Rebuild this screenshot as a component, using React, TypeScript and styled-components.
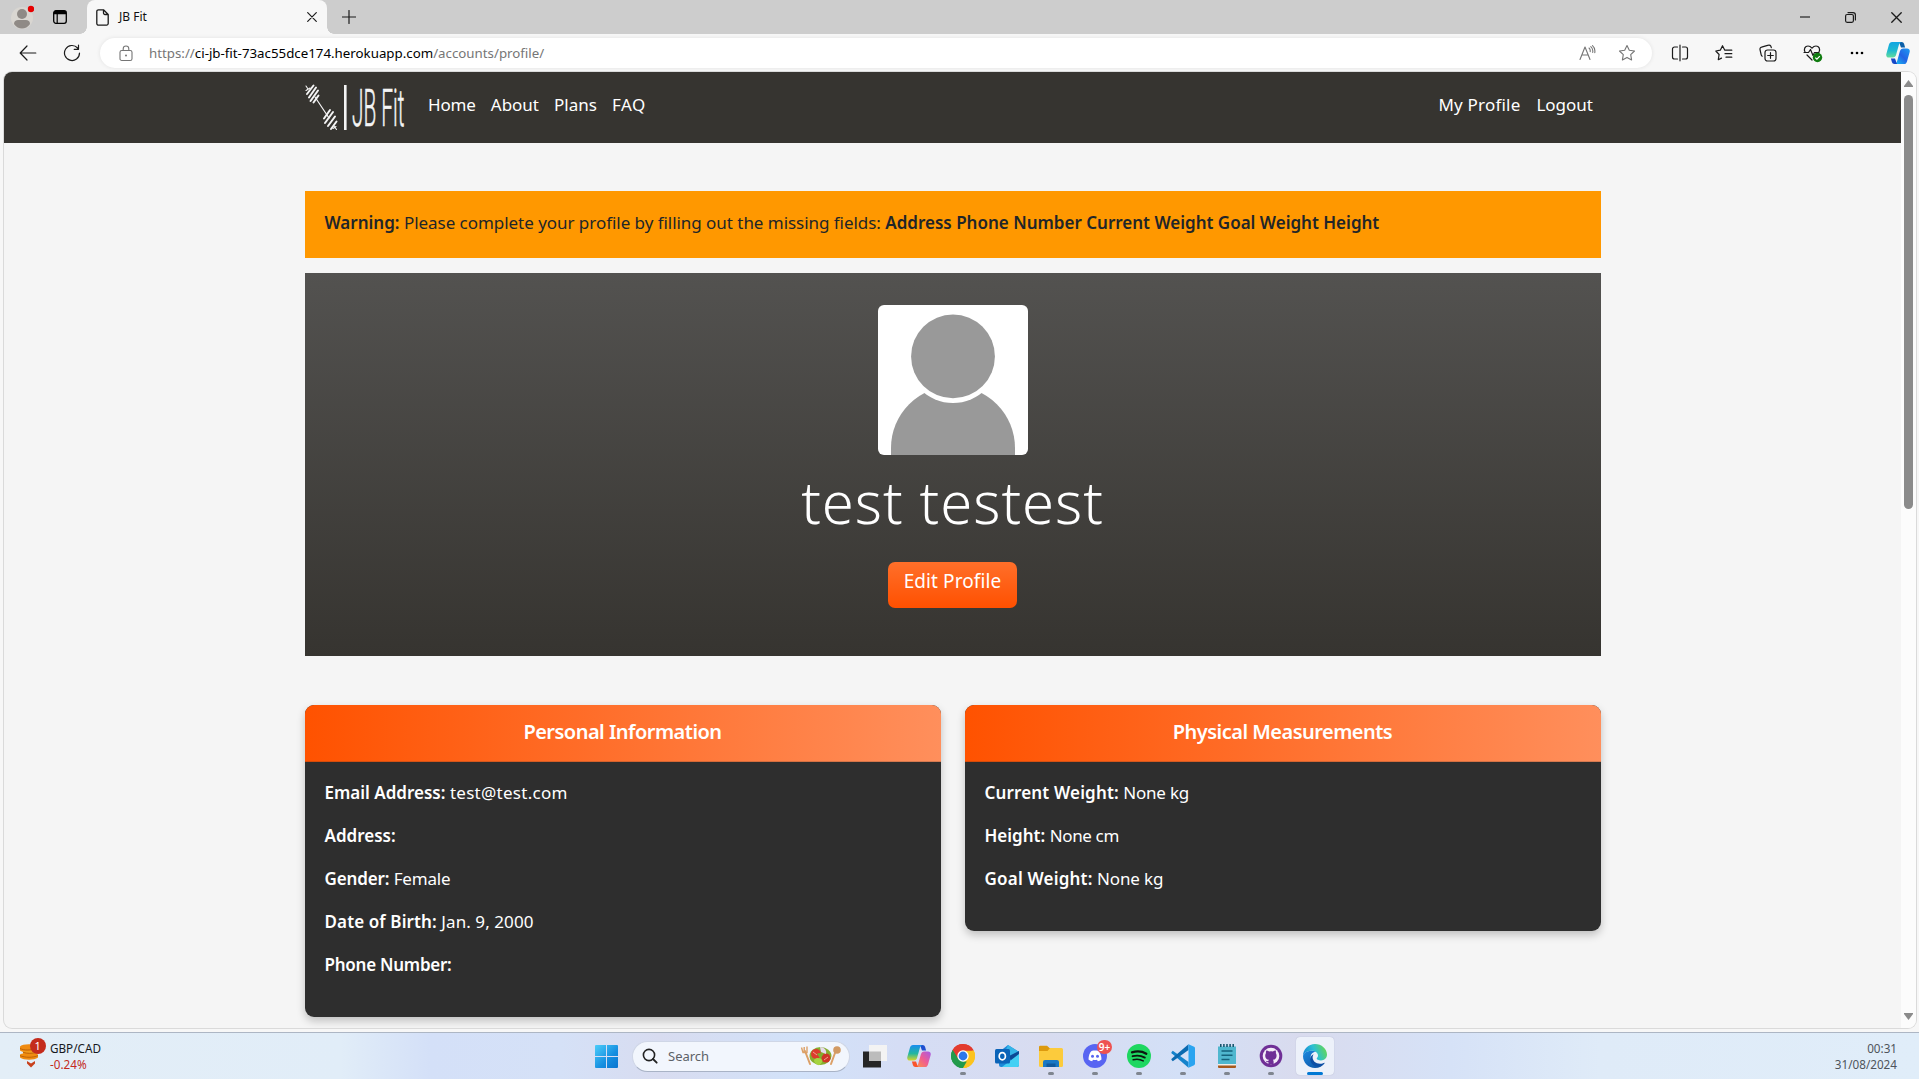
import React from 'react';
import styled, { createGlobalStyle } from 'styled-components';

const Global = createGlobalStyle`
  * { box-sizing: border-box; }
  html, body { margin: 0; padding: 0; overflow: hidden; }
  body { font-family: "Noto Sans", "Open Sans", sans-serif; color: #212529; }
  svg { display: block; flex: none; }
`;

/* ---------- window ---------- */
const Desktop = styled.div`
  width: 1919px;
  height: 1079px;
  display: flex;
  flex-direction: column;
  background: #f7f7f7;
  overflow: hidden;
`;

const TabStrip = styled.div`
  height: 34px;
  flex: none;
  display: flex;
  background: #cdcdcd;
`;

const StripTools = styled.div`
  width: 87px;
  display: flex;
  align-items: center;
  gap: 19px;
  padding-left: 11px;
`;

const Tab = styled.div`
  position: relative;
  width: 240px;
  height: 34px;
  display: flex;
  align-items: center;
  padding: 0 10px 0 9px;
  background: #f7f7f7;
  border-radius: 8px 8px 0 0;

  &::before,
  &::after {
    content: '';
    position: absolute;
    bottom: 0;
    width: 7px;
    height: 7px;
  }
  &::before {
    left: -7px;
    background: radial-gradient(circle at 0 0, #cdcdcd 6.5px, #f7f7f7 7px);
  }
  &::after {
    right: -7px;
    background: radial-gradient(circle at 100% 0, #cdcdcd 6.5px, #f7f7f7 7px);
  }
`;

const TabTitle = styled.span`
  flex: 1;
  margin: -1px 0 0 10px;
  font-size: 12px;
  color: #111;
`;

const NewTab = styled.div`
  display: flex;
  align-items: center;
  margin-left: 15px;
`;

const WindowButtons = styled.div`
  margin-left: auto;
  display: flex;
`;

const WindowButton = styled.div`
  width: 45.7px;
  display: grid;
  place-items: center;
`;

const Toolbar = styled.div`
  height: 38px;
  flex: none;
  display: flex;
  align-items: center;
  background: #f7f7f7;
`;

const NavButtons = styled.div`
  width: 100px;
  display: flex;
  align-items: center;
  gap: 26px;
  padding-left: 19px;
`;

const AddressBar = styled.div`
  width: 1552px;
  height: 30px;
  margin-right: 6px;
  display: flex;
  align-items: center;
  padding: 0 16px 0 19px;
  background: #fff;
  border-radius: 15px;
  box-shadow: 0 0 4px rgba(0, 0, 0, 0.09);
`;

const Url = styled.div`
  flex: 1;
  margin-left: 16px;
  font-size: 13.3px;
  color: #767676;
  white-space: nowrap;

  b {
    font-weight: 400;
    color: #000;
  }
`;

const AddressActions = styled.div`
  display: flex;
  align-items: center;
  gap: 22px;
`;

const ToolSlot = styled.div<{ $w?: number }>`
  width: ${(p) => p.$w ?? 44}px;
  display: grid;
  place-items: center;
`;

/* ---------- page ---------- */
const Viewport = styled.div`
  height: 956px;
  flex: none;
  margin: 0 3px 0 4px;
  display: flex;
  background: #f5f5f5;
  border-radius: 8px;
  overflow: hidden;
  box-shadow: 0 0 0 1px #dadada;
`;

const Page = styled.div`
  width: 1897px;
  display: flex;
  flex-direction: column;
  align-items: center;
`;

const SiteNav = styled.nav`
  width: 100%;
  height: 71px;
  flex: none;
  display: flex;
  padding: 0 300px 0 301px;
  background: #363430;
`;

const Brand = styled.div`
  width: 123px;
  padding-top: 4px;
`;

const BrandText = styled.text`
  font-family: Roboto, "Noto Sans", sans-serif;
  font-weight: 300;
  font-size: 51px;
  fill: #f4f4f4;
  stroke: #f4f4f4;
  stroke-width: 0.6px;
`;

const Links = styled.div<{ $right?: boolean }>`
  display: flex;
  gap: ${(p) => (p.$right ? 16 : 15)}px;
  margin-left: ${(p) => (p.$right ? 'auto' : '0')};
  padding: 19px ${(p) => (p.$right ? 8 : 0)}px 0 0;
`;

const NavLink = styled.a<{ $track?: number }>`
  font-size: 17px;
  line-height: 27px;
  letter-spacing: ${(p) => p.$track ?? 0}px;
  color: #fff;
`;

const Container = styled.main`
  width: 1296px;
  margin-top: 48px;
`;

const Warning = styled.div`
  height: 67px;
  padding: 18px 20px 0;
  background: #ff9800;
  font-size: 17px;
  line-height: 27px;
  letter-spacing: -0.04px;
  white-space: nowrap;
  color: #212529;

  strong {
    font-weight: 600;
    letter-spacing: 0;
  }
`;

const Hero = styled.section`
  height: 383px;
  margin-top: 15px;
  padding-top: 32px;
  display: flex;
  flex-direction: column;
  align-items: center;
  background: linear-gradient(#535250, #363430);
`;

const Avatar = styled.svg`
  width: 150px;
  height: 150px;
  border-radius: 6px;
  background: #fff;
`;

const Name = styled.h1`
  margin: 13px 0 26px;
  font-size: 58px;
  line-height: 68px;
  font-weight: 300;
  letter-spacing: 0.95px;
  color: #fff;
`;

const EditButton = styled.button`
  width: 129px;
  height: 46px;
  padding: 5px 0 13px;
  border: 0;
  border-radius: 7px;
  background: linear-gradient(#ff6f2a, #ff5000);
  font-family: inherit;
  font-size: 19px;
  line-height: 28px;
  letter-spacing: 0.1px;
  color: #fff;
`;

const Cards = styled.div`
  display: grid;
  grid-template-columns: 636px 636px;
  gap: 24px;
  align-items: start;
  margin-top: 49px;
`;

const Card = styled.section`
  background: #2e2e2e;
  border-radius: 9px;
  overflow: hidden;
  box-shadow: 0 4px 8px rgba(0, 0, 0, 0.22);
`;

const CardHeader = styled.h2`
  height: 57px;
  margin: 0;
  padding-top: 12px;
  text-align: center;
  font-size: 20px;
  line-height: 30px;
  font-weight: 600;
  letter-spacing: -0.52px;
  color: #fff;
  border-bottom: 1px solid rgba(46, 46, 46, 0.2);
  background: linear-gradient(90deg, #ff5200, #ff8f5c) border-box;
`;

const CardBody = styled.div`
  padding: 17px 20px 23px;
`;

const Field = styled.p`
  margin: 0 0 16px;
  font-size: 17px;
  line-height: 27px;
  color: #fff;
`;

const Label = styled.strong<{ $track: number }>`
  font-weight: 600;
  letter-spacing: ${(p) => p.$track}px;
`;

const Value = styled.span<{ $track: number }>`
  letter-spacing: ${(p) => p.$track}px;
`;

const Scrollbar = styled.div`
  width: 15px;
  display: flex;
  flex-direction: column;
  align-items: center;
  padding: 8px 0;
  background: #fcfcfc;
`;

const Thumb = styled.div`
  width: 9px;
  height: 414px;
  margin: 8px 0 auto;
  border-radius: 5px;
  background: #8b8b8b;
`;

/* ---------- taskbar ---------- */
const Taskbar = styled.footer`
  height: 47px;
  margin-top: 4px;
  flex: none;
  display: grid;
  grid-template-columns: 586px auto 1fr;
  border-top: 1px solid #adb6c4;
  background: linear-gradient(
    90deg,
    #e3eef7 0,
    #e1edf8 340px,
    #d4e0f8 430px,
    #d5e1f7 560px,
    #d8dcf0 660px,
    #d2e2f9 800px,
    #d5ddf5 900px,
    #d8dcf0 1050px,
    #d3e0f7 1180px,
    #d9dbee 1300px,
    #d6e2f7 1450px,
    #dfebf8 1600px,
    #e0edf9 1919px
  );
`;

const Widget = styled.div`
  display: flex;
  padding-left: 17px;
`;

const WidgetIcon = styled.div`
  width: 33px;
  padding-top: 4px;
`;

const TwoLines = styled.div<{ $end?: boolean }>`
  display: flex;
  flex-direction: column;
  padding: ${(p) => (p.$end ? '7px 22px 0 0' : '7px 0 0')};
  text-align: ${(p) => (p.$end ? 'right' : 'left')};
  font-size: 11.7px;
  line-height: 16px;
  color: ${(p) => (p.$end ? '#4e545b' : '#16191d')};
`;

const Loss = styled.span`
  color: #c42b1c;
`;

const Apps = styled.div`
  display: flex;
  align-items: center;
`;

const StartSlot = styled.div`
  width: 46px;
  padding-left: 9px;
`;

const SearchBox = styled.div`
  width: 218px;
  height: 31px;
  margin-right: 3px;
  display: flex;
  align-items: center;
  padding: 0 7px 0 9px;
  border: 1px solid #cfd6e6;
  border-bottom-color: #a9b3c6;
  border-radius: 16px;
  background: #f2f6fd;

  span {
    flex: 1;
    margin-left: 10px;
    font-size: 13px;
    color: #5d6167;
  }
`;

const AppSlot = styled.div`
  position: relative;
  width: 44px;
  height: 46px;
  display: grid;
  place-items: center;
`;

const ActiveTile = styled.div`
  width: 38px;
  height: 38px;
  display: grid;
  place-items: center;
  border-radius: 4px;
  background: #edf1fa;
  box-shadow: 0 0 1px rgba(90, 100, 130, 0.4);
`;

const Running = styled.i<{ $active?: boolean }>`
  position: absolute;
  bottom: 4px;
  left: 50%;
  transform: translateX(-50%);
  width: ${(p) => (p.$active ? 16 : 6)}px;
  height: 3px;
  border-radius: 2px;
  background: ${(p) => (p.$active ? '#0078d4' : '#7f858f')};
`;

const Badge = styled.b`
  position: absolute;
  left: 24px;
  top: 7px;
  width: 15px;
  height: 14px;
  border-radius: 7px;
  background: #ee5251;
  color: #fff;
  font-size: 10px;
  line-height: 14px;
  font-weight: 600;
  text-align: center;
`;

const WidgetCount = styled.text`
  font-family: "Noto Sans", sans-serif;
  font-size: 11px;
  fill: #fff;
`;

const line = { fill: 'none', stroke: '#1b1b1b', strokeWidth: 1.2, strokeLinecap: 'round', strokeLinejoin: 'round' } as const;
const faint = { ...line, stroke: '#757575', strokeWidth: 1.1 } as const;

/* ---------- browser icons ---------- */
const ProfileIcon = () => (
  <svg width="23" height="24" viewBox="0 0 23 24">
    <circle cx="11" cy="13" r="11" fill="#d9d6d1" />
    <circle cx="11" cy="9" r="5" fill="#8f8a86" />
    <path d="M3 19c0-3 2-4 4-4h8c2 0 4 1 4 4-2 3-5 4.500-8 4.500S5 22 3 19z" fill="#8f8a86" />
    <circle cx="20" cy="4" r="3.200" fill="#e60000" />
  </svg>
);

const TabActionsIcon = () => (
  <svg width="14" height="14" viewBox="0 0 14 14">
    <rect x=".7" y=".7" width="12.600" height="12.600" rx="2.200" fill="none" stroke="#000" strokeWidth="1.300" />
    <path d="M.7 3a2.300 2.300 0 0 1 2.300-2.300h8A2.300 2.300 0 0 1 13.300 3v1.300H.7z" fill="#000" />
    <path d="M4.200 4v9.300" stroke="#000" strokeWidth="1.200" />
  </svg>
);

const DocIcon = () => (
  <svg width="13" height="17" viewBox="0 0 13 17">
    <path {...line} strokeWidth={1.3} d="M2.500.8h5L12.200 5.500v9a1.600 1.600 0 0 1-1.600 1.600h-8A1.700 1.700 0 0 1 .8 14.500v-12A1.700 1.700 0 0 1 2.500.8zM7.500.8v3.200a1.500 1.500 0 0 0 1.500 1.500h3.200" />
  </svg>
);

const Cross = ({ size }: { size: number }) => (
  <svg width={size} height={size} viewBox="0 0 10 10">
    <path {...line} d="M.7.7l8.600 8.600M9.300.7L.7 9.300" />
  </svg>
);

const PlusIcon = () => (
  <svg width="14" height="14" viewBox="0 0 14 14">
    <path {...line} d="M7 .5v13M.5 7h13" />
  </svg>
);

const BackIcon = () => (
  <svg width="18" height="16" viewBox="0 0 18 16">
    <path {...line} d="M8 1L1.200 8 8 15M1.200 8h15.600" />
  </svg>
);

const ReloadIcon = () => (
  <svg width="18" height="18" viewBox="0 0 18 18">
    <path {...line} d="M16.500 9A7.500 7.500 0 1 1 14.600 4M15.500 1v4.300h-4.300" />
  </svg>
);

const LockIcon = () => (
  <svg width="14" height="17" viewBox="0 0 14 17">
    <rect {...faint} x="1" y="5.500" width="12" height="10" rx="1.800" />
    <path {...faint} d="M4.200 5.500V3.800a2.800 2.800 0 0 1 5.600 0v1.700" />
    <circle cx="7" cy="10.500" r="1" fill="#757575" />
  </svg>
);

const ReadAloudIcon = () => (
  <svg width="17" height="16" viewBox="0 0 17 16">
    <path {...faint} d="M1 14.500L6 2l5 12.500M2.800 10h6.400M10 3c1 .8 1.400 2.200 1.200 3.600M11.800 1.600c1.700 1.400 2.300 3.600 1.900 5.900M13.500.6c2 1.700 2.700 4.200 2.300 7" />
  </svg>
);

const STAR = 'M9 1.500l2.300 4.700 5.200.8-3.800 3.700.9 5.200L9 13.400l-4.600 2.500.9-5.200L1.500 7l5.200-.8z';

const StarIcon = () => (
  <svg width="18" height="18" viewBox="0 0 18 18">
    <path {...faint} d={STAR} />
  </svg>
);

const SplitIcon = () => (
  <svg width="18" height="18" viewBox="0 0 18 18">
    <path {...line} d="M6.500 3H3.500A2 2 0 0 0 1.500 5v8a2 2 0 0 0 2 2h3M11.500 3h3a2 2 0 0 1 2 2v8a2 2 0 0 1-2 2h-3M9 1.200v15.600" />
  </svg>
);

const FavoritesIcon = () => (
  <svg width="18" height="18" viewBox="0 0 18 18">
    <path {...line} d="M11.500 6.200h-1.700L7.500 1.700 5.300 6.200.8 7l3.300 3.500-.8 5.200 3.200-1.600M11 6.200h5.800M10 9.700h6.800M11 13.200h5.800" />
  </svg>
);

const CollectionsIcon = () => (
  <svg width="18" height="18" viewBox="0 0 18 18">
    <rect {...line} x="6" y="6" width="11" height="11" rx="2.500" />
    <path {...line} d="M11.500 8.700v5.600M8.700 11.500h5.600M3.200 12.200a2 2 0 0 1-1-1.300L1 5.500a2 2 0 0 1 1.500-2.400L9.500 1.200A2 2 0 0 1 12 2.600l.3 1" />
  </svg>
);

const HealthIcon = () => (
  <svg width="20" height="19" viewBox="0 0 20 19">
    <path {...line} d="M2 8C.5 5 2 2 5 2c2 0 3.200 1.200 4 2.200C9.800 3.200 11 2 13 2c3 0 4.500 3 3 6M4 11l5 5M1 8.500h4.500L7.500 5.500l2.500 6 1.500-3h4.500" />
    <circle cx="14.500" cy="13.500" r="4.700" fill="#107c10" />
    <path d="M12.300 13.600l1.600 1.600 2.900-3" fill="none" stroke="#fff" strokeWidth="1.200" />
  </svg>
);

const DotsIcon = () => (
  <svg width="14" height="4" viewBox="0 0 14 4">
    <circle cx="2" cy="2" r="1.300" />
    <circle cx="7" cy="2" r="1.300" />
    <circle cx="12" cy="2" r="1.300" />
  </svg>
);

const CopilotIcon = ({ warm }: { warm?: boolean }) => {
  const id = warm ? 'warm' : 'cool';
  return (
    <svg width="24" height="24" viewBox="0 0 24 24">
      <defs>
        <linearGradient id={`${id}-a`} x1="0" y1="0" x2="0" y2="1">
          <stop offset="0" stopColor={warm ? '#1a8df0' : '#12a5e2'} />
          <stop offset=".55" stopColor={warm ? '#21b6a0' : '#1fbad0'} />
          <stop offset="1" stopColor={warm ? '#d8d52a' : '#62dc9b'} />
        </linearGradient>
        <linearGradient id={`${id}-b`} x1="1" y1="0" x2="0" y2="1">
          <stop offset="0" stopColor={warm ? '#a55be8' : '#1d9bf3'} />
          <stop offset=".5" stopColor={warm ? '#ef5d92' : '#2463e4'} />
          <stop offset="1" stopColor={warm ? '#ff9640' : '#15c3f5'} />
        </linearGradient>
      </defs>
      <path d="M13 1h2.500c1.500 0 2.200.8 2.600 2l1 3.500H15z" fill={warm ? '#1f4fd0' : '#0c5fa8'} />
      <path d="M6 1h9.500c-1.700.4-2.300 1.800-2.800 3.600l-2.600 9.100c-.5 1.700-1.500 2.800-3.400 2.800H3C.8 16.500-.2 15 .4 12.700L3 3.600C3.500 2 4.400 1 6 1z" fill={`url(#${id}-a)`} />
      <path d="M18 23H8.500c1.700-.4 2.300-1.800 2.800-3.600l2.600-9.100c.5-1.700 1.500-2.800 3.400-2.800H21c2.200 0 3.200 1.500 2.600 3.800L21 20.400C20.500 22 19.600 23 18 23z" fill={`url(#${id}-b)`} />
      <path d="M11 23H8.500c-1.500 0-2.200-.8-2.600-2l-1-3.500H9z" fill={warm ? '#f9542c' : '#1647c8'} />
    </svg>
  );
};

/* ---------- site logo ---------- */
const Logo = () => (
  <svg width="112" height="62" viewBox="0 -7 112 62">
    <g stroke="#f4f4f4" fill="none" strokeLinecap="round">
      <path d="M10 14l14 21" strokeWidth="1.200" />
      <path d="M1 7.500L5 5M1 3l2 3M31.500 46.500L29 43M28 45.500l3-2" strokeWidth="1.100" />
      <path d="M2 11L8.500 2.500M4 14.500L11 4.500M5.500 18L13 7.500M8.500 19.500l5-7" strokeWidth="2" />
      <path d="M19 35.500l6-8.500M20 40L28 29M23 43l7-9.500M26 46l5.500-7.500" strokeWidth="2" />
    </g>
    <rect x="39" y="2" width="2.600" height="45" fill="#f4f4f4" />
    <BrandText transform="translate(47 43) scale(.43 1)" textLength="122" lengthAdjust="spacingAndGlyphs">
      JB Fit
    </BrandText>
  </svg>
);

const AvatarArt = () => (
  <Avatar viewBox="0 0 150 150">
    <path d="M13 150v-7a62 62 0 0 1 124 0v7z" fill="#999" />
    <circle cx="75" cy="51.400" r="46.600" fill="#fff" />
    <circle cx="75" cy="51.400" r="41.900" fill="#999" />
  </Avatar>
);

/* ---------- taskbar icons ---------- */
const CoinsIcon = () => (
  <svg width="30" height="32" viewBox="0 0 30 32">
    <path d="M3 9.500c2-2.500 12-3 15-1v5c-3 2.500-12 2.500-15 0z" fill="#ef8b12" />
    <path d="M6 14h14v4H6z" fill="#f09a1c" />
    <path d="M3 17.500c3-2 14-2 18 0v3c-4 3-14 3-18 0z" fill="#f08c10" />
    <path d="M3 11.500c4 2 10 2 15 0M6 15.300c4 1.400 9 1.400 14 0M3 18.600c5 2.200 13 2.200 18 0" stroke="#b85f07" strokeWidth=".9" fill="none" />
    <path d="M10 24l4 2.500 4-2.500v2.500l-4 4-4-4z" fill="#c8401c" />
    <circle cx="21" cy="9" r="8" fill="#c42b1c" />
    <WidgetCount x="17.500" y="13">1</WidgetCount>
  </svg>
);

const StartIcon = () => (
  <svg width="23" height="23" viewBox="0 0 23 23">
    <defs>
      <linearGradient id="win" x1="0" y1="0" x2="1" y2="1">
        <stop offset="0" stopColor="#4ccdfa" />
        <stop offset=".6" stopColor="#158ee0" />
        <stop offset="1" stopColor="#0a74d0" />
      </linearGradient>
    </defs>
    <path fill="url(#win)" d="M0 1a1 1 0 0 1 1-1h10v11H0zM12 0h10a1 1 0 0 1 1 1v10H12zM0 12h11v11H1a1 1 0 0 1-1-1zM12 12h11v10a1 1 0 0 1-1 1H12z" />
  </svg>
);

const SearchIcon = () => (
  <svg width="16" height="16" viewBox="0 0 16 16">
    <circle cx="7" cy="7" r="5.600" fill="none" stroke="#222" strokeWidth="1.600" />
    <path d="M11 11l3.700 3.700" stroke="#222" strokeWidth="1.800" strokeLinecap="round" />
  </svg>
);

const SaladIcon = () => (
  <svg width="42" height="22" viewBox="0 0 42 22">
    <path d="M5 6l5 13M35 8l-4 11" stroke="#dca067" strokeWidth="2" strokeLinecap="round" />
    <path d="M1.500 2.500L3 7.500h4L7 1.500M4.200 2v5" fill="none" stroke="#dca067" strokeWidth="1.400" />
    <ellipse cx="37" cy="5" rx="3.800" ry="3.800" fill="#d29a63" />
    <ellipse cx="20.500" cy="11" rx="11" ry="9" fill="#86ad2f" />
    <circle cx="16" cy="9" r="5" fill="#dc3c2e" />
    <circle cx="26" cy="13" r="4.500" fill="#cf3427" />
    <path d="M20 2c4 0 7 3 6 7l-5-2z" fill="#e6d9ea" />
    <path d="M14 15c2-3 7-2 8 0s-2 6-4 5-4-2-4-5z" fill="#a5d442" />
    <path d="M17 9c2-2 5-1 6 1l-3 3z" fill="#7fae2c" />
    <path d="M13 7l4 3M24 15l4-3" stroke="#f3a08d" />
  </svg>
);

const TaskViewIcon = () => (
  <svg width="24" height="24" viewBox="0 0 24 24">
    <rect x="0" y="7.500" width="18" height="16" fill="#262626" />
    <rect x="6" y="1" width="18" height="16" fill="#f3f3f3" />
    <rect x="6" y="7.500" width="12" height="9.500" fill="#bcbcbc" />
  </svg>
);

const ChromeIcon = () => (
  <svg width="24" height="24" viewBox="0 0 24 24">
    <path d="M12 12L1.610 6A12 12 0 0 1 22.390 6z" fill="#e33b2e" />
    <path d="M12 12L22.390 6A12 12 0 0 1 12 24z" fill="#fcc31e" />
    <path d="M12 12v12A12 12 0 0 1 1.610 6z" fill="#229a4b" />
    <path d="M12 6.500h10.700A12 12 0 0 1 12 24l5-9z" fill="#fcc31e" />
    <path d="M1.610 6A12 12 0 0 1 22.600 6.500H12L7 14.500z" fill="#e33b2e" />
    <path d="M1.610 6L7 15l5 2.500h3.800L12 24A12 12 0 0 1 1.610 6z" fill="#229a4b" />
    <circle cx="12" cy="12" r="5.700" fill="#fff" />
    <circle cx="12" cy="12" r="4.400" fill="#2e78ea" />
  </svg>
);

const OutlookIcon = () => (
  <svg width="24" height="24" viewBox="0 0 24 24">
    <path d="M4 8l9-7 11 7v13a2 2 0 0 1-2 2H6a2 2 0 0 1-2-2z" fill="#1a88d8" />
    <path d="M13 1l11 7-9 6-6-4z" fill="#36b5e8" />
    <path d="M14 12l10-5v5l-8 5z" fill="#0c4a96" />
    <path d="M24 10v11a2 2 0 0 1-2 2H7z" fill="#43d0f4" />
    <rect x="0" y="5" width="15" height="14.500" rx="1.500" fill="#0b64b8" />
    <ellipse cx="7.300" cy="12.200" rx="3.100" ry="3.600" fill="none" stroke="#fff" strokeWidth="1.700" />
  </svg>
);

const FolderIcon = () => (
  <svg width="24" height="24" viewBox="0 0 24 24">
    <path d="M0 3a1.300 1.300 0 0 1 1.300-1.300H8L10.500 4H22v5H0z" fill="#dd9a0e" />
    <path d="M0 7h8.500L11 4h11.500A1.500 1.500 0 0 1 24 5.500v16a1.500 1.500 0 0 1-1.500 1.500h-21A1.500 1.500 0 0 1 0 21.500z" fill="#fccb3c" />
    <path d="M4 18a2 2 0 0 1 2-2h12a2 2 0 0 1 2 2v5H4z" fill="#1a78c4" />
    <path d="M7.500 19.500h9V23h-9z" fill="#115a9d" />
  </svg>
);

const DiscordIcon = () => (
  <svg width="24" height="24" viewBox="0 0 24 24">
    <circle cx="12" cy="12" r="12" fill="#5865f2" />
    <path d="M8.500 7c2.300-.6 4.700-.6 7 0 1.800 1.500 3 5.200 3 8.500-1.200 1-2.400 1.500-3.700 1.700l-.8-1.400c-1.300.3-2.700.3-4 0l-.8 1.400c-1.300-.2-2.500-.7-3.700-1.700 0-3.300 1.200-7 3-8.500z" fill="#fff" />
    <circle cx="9.500" cy="12.300" r="1.500" fill="#5865f2" />
    <circle cx="14.500" cy="12.300" r="1.500" fill="#5865f2" />
  </svg>
);

const SpotifyIcon = () => (
  <svg width="24" height="24" viewBox="0 0 24 24">
    <circle cx="12" cy="12" r="12" fill="#1ed760" />
    <g fill="none" stroke="#0c160f" strokeLinecap="round">
      <path d="M5 8.300c5-1.400 10.300-1 14.300 1.400" strokeWidth="2.300" />
      <path d="M5.600 12.200c4.300-1.100 8.700-.6 12.200 1.400" strokeWidth="1.900" />
      <path d="M6.200 15.700c3.600-.9 7.100-.5 10 1.200" strokeWidth="1.600" />
    </g>
  </svg>
);

const CodeIcon = () => (
  <svg width="24" height="24" viewBox="0 0 24 24">
    <path d="M1.800 6.800L17.500 18v5.800L.6 9.200c-.4-.4-.4-.9 0-1.300z" fill="#1483cc" />
    <path d="M1.800 17.200L17.500 6V.2L.6 14.800c-.4.400-.4.900 0 1.300z" fill="#0b6ab0" />
    <path d="M17.500.2l5.600 2.600c.6.300.9.700.9 1.400v15.600c0 .7-.3 1.100-.9 1.400l-5.600 2.600z" fill="#2aa4f0" />
  </svg>
);

const NotepadIcon = () => (
  <svg width="24" height="24" viewBox="0 0 24 24">
    <path d="M3 2.500h18V21H3z" fill="#4fb7cf" />
    <path d="M3 20h18v1.500H3z" fill="#f4efe4" />
    <path d="M3 21.500h18V23a1 1 0 0 1-1 1H4a1 1 0 0 1-1-1z" fill="#a85a1c" />
    <path d="M5.800 0v3M8.900 0v3M12 0v3M15.100 0v3M18.200 0v3" stroke="#0f4f66" strokeWidth="1.500" />
    <path d="M6.500 7h11M6.500 11.300h11M6.500 15.600h8" stroke="#15637d" strokeWidth="1.500" />
  </svg>
);

const GithubIcon = () => (
  <svg width="24" height="24" viewBox="0 0 24 24">
    <circle cx="12" cy="12" r="11.300" fill="#6f2f96" />
    <circle cx="12" cy="12" r="8.300" fill="#f3ecf7" />
    <path d="M7.300 6.600c1-.1 2 .4 2.800 1a8 8 0 0 1 3.800 0c.8-.6 1.800-1.100 2.800-1 .4 1 .3 1.900.1 2.500 1.600 2.200.8 6.300-2.900 6.700.6.600.7 1.200.7 2v2.300h-5.200v-2c-1.500.3-2.200-.2-2.700-1.300.9.100 1.300.7 2.700.3 0-.5.200-.9.500-1.300-3.700-.4-4.500-4.500-2.900-6.700-.2-.6-.1-1.500.3-2.500z" fill="#6f2f96" />
  </svg>
);

const EdgeIcon = () => (
  <svg width="24" height="24" viewBox="0 0 24 24">
    <defs>
      <linearGradient id="edge-top" x1="0" y1=".6" x2="1" y2=".3">
        <stop offset="0" stopColor="#1583d6" />
        <stop offset=".5" stopColor="#2cc0d2" />
        <stop offset="1" stopColor="#67d850" />
      </linearGradient>
      <linearGradient id="edge-low" x1="0" y1="0" x2="1" y2="1">
        <stop offset="0" stopColor="#1b8ae0" />
        <stop offset="1" stopColor="#0d4b9c" />
      </linearGradient>
    </defs>
    <path d="M0 12C0 5 5.400 0 12 0s12 4.900 12 10.500c0 3.600-2.700 5.900-6 5.900-2.600 0-4.300-.9-4.300-1.900 0-.8 1.300-1.100 1.300-3 0-2.300-2.400-4.700-6.200-4.700C4 6.800 1 9 0 12z" fill="url(#edge-top)" />
    <path d="M0 12c.8-3 3.800-5.200 8.800-5.200 1.500 0 2.800.4 3.900 1C9 8 7.500 11 7.700 13.500 8 17.500 11.500 20.500 16 20.500c2.800 0 4.500-1 5.800-1.800C19.700 22 16.200 24 12 24 5.200 24 0 18.500 0 12z" fill="url(#edge-low)" />
    <path d="M10.600 10.200c-2.200 3-.6 7.600 3.400 9 3 1 6 .2 7.800-.5-2 3.300-6.700 4.600-10.200 3-5-2.300-6-9.500-1-11.500z" fill="#0e4fa5" />
  </svg>
);

const apps: { icon: React.ReactNode; running?: boolean; badge?: string }[] = [
  { icon: <TaskViewIcon /> },
  { icon: <CopilotIcon warm /> },
  { icon: <ChromeIcon />, running: true },
  { icon: <OutlookIcon /> },
  { icon: <FolderIcon />, running: true },
  { icon: <DiscordIcon />, running: true, badge: '9+' },
  { icon: <SpotifyIcon />, running: true },
  { icon: <CodeIcon />, running: true },
  { icon: <NotepadIcon />, running: true },
  { icon: <GithubIcon />, running: true },
];

type Row = { label: string; value?: string; labelTrack?: number; valueTrack?: number };

const cards: { title: string; rows: Row[] }[] = [
  {
    title: 'Personal Information',
    rows: [
      { label: 'Email Address:', value: 'test@test.com', valueTrack: 0.28 },
      { label: 'Address:' },
      { label: 'Gender:', value: 'Female', labelTrack: -0.15, valueTrack: -0.2 },
      { label: 'Date of Birth:', value: 'Jan. 9, 2000', labelTrack: 0.12, valueTrack: 0.08 },
      { label: 'Phone Number:', labelTrack: -0.25 },
    ],
  },
  {
    title: 'Physical Measurements',
    rows: [
      { label: 'Current Weight:', value: 'None kg', labelTrack: 0.16, valueTrack: -0.2 },
      { label: 'Height:', value: 'None cm', valueTrack: -0.35 },
      { label: 'Goal Weight:', value: 'None kg', labelTrack: 0.2, valueTrack: -0.15 },
    ],
  },
];

export default function App() {
  return (
    <Desktop>
      <Global />
      <TabStrip>
        <StripTools>
          <ProfileIcon />
          <TabActionsIcon />
        </StripTools>
        <Tab>
          <DocIcon />
          <TabTitle>JB Fit</TabTitle>
          <Cross size={10} />
        </Tab>
        <NewTab>
          <PlusIcon />
        </NewTab>
        <WindowButtons>
          <WindowButton>
            <svg width="10" height="2">
              <path d="M0 1h10" stroke="#000" />
            </svg>
          </WindowButton>
          <WindowButton>
            <svg width="11" height="11" viewBox="0 0 11 11">
              <rect {...line} x=".6" y="2.500" width="7.800" height="7.800" rx="1.500" />
              <path {...line} d="M3 .6h5A2.400 2.400 0 0 1 10.400 3v5" />
            </svg>
          </WindowButton>
          <WindowButton>
            <Cross size={11} />
          </WindowButton>
        </WindowButtons>
      </TabStrip>

      <Toolbar>
        <NavButtons>
          <BackIcon />
          <ReloadIcon />
        </NavButtons>
        <AddressBar>
          <LockIcon />
          <Url>
            https://<b>ci-jb-fit-73ac55dce174.herokuapp.com</b>/accounts/profile/
          </Url>
          <AddressActions>
            <ReadAloudIcon />
            <StarIcon />
          </AddressActions>
        </AddressBar>
        <ToolSlot><SplitIcon /></ToolSlot>
        <ToolSlot><FavoritesIcon /></ToolSlot>
        <ToolSlot><CollectionsIcon /></ToolSlot>
        <ToolSlot $w={45}><HealthIcon /></ToolSlot>
        <ToolSlot $w={43}><DotsIcon /></ToolSlot>
        <ToolSlot $w={40}><CopilotIcon /></ToolSlot>
      </Toolbar>

      <Viewport>
        <Page>
          <SiteNav>
            <Brand>
              <Logo />
            </Brand>
            <Links>
              <NavLink $track={-0.15}>Home</NavLink>
              <NavLink>About</NavLink>
              <NavLink>Plans</NavLink>
              <NavLink $track={0.6}>FAQ</NavLink>
            </Links>
            <Links $right>
              <NavLink $track={0.2}>My Profile</NavLink>
              <NavLink>Logout</NavLink>
            </Links>
          </SiteNav>
          <Container>
            <Warning>
              <strong>Warning:</strong> Please complete your profile by filling out the missing fields:{' '}
              <strong>Address Phone Number Current Weight Goal Weight Height</strong>
            </Warning>
            <Hero>
              <AvatarArt />
              <Name>test testest</Name>
              <EditButton>Edit Profile</EditButton>
            </Hero>
            <Cards>
              {cards.map((card) => (
                <Card key={card.title}>
                  <CardHeader>{card.title}</CardHeader>
                  <CardBody>
                    {card.rows.map((row) => (
                      <Field key={row.label}>
                        <Label $track={row.labelTrack ?? 0}>{row.label}</Label>{' '}
                        {row.value && <Value $track={row.valueTrack ?? 0}>{row.value}</Value>}
                      </Field>
                    ))}
                  </CardBody>
                </Card>
              ))}
            </Cards>
          </Container>
        </Page>
        <Scrollbar>
          <svg width="9" height="7" viewBox="0 0 9 7">
            <path d="M4.500 0L9 6v1H0V6z" fill="#8b8b8b" />
          </svg>
          <Thumb />
          <svg width="9" height="7" viewBox="0 0 9 7">
            <path d="M4.500 7L9 1V0H0v1z" fill="#8b8b8b" />
          </svg>
        </Scrollbar>
      </Viewport>

      <Taskbar>
        <Widget>
          <WidgetIcon>
            <CoinsIcon />
          </WidgetIcon>
          <TwoLines>
            <span>GBP/CAD</span>
            <Loss>-0.24%</Loss>
          </TwoLines>
        </Widget>
        <Apps>
          <StartSlot>
            <StartIcon />
          </StartSlot>
          <SearchBox>
            <SearchIcon />
            <span>Search</span>
            <SaladIcon />
          </SearchBox>
          {apps.map((app, i) => (
            <AppSlot key={i}>
              {app.icon}
              {app.badge && <Badge>{app.badge}</Badge>}
              {app.running && <Running />}
            </AppSlot>
          ))}
          <AppSlot>
            <ActiveTile>
              <EdgeIcon />
            </ActiveTile>
            <Running $active />
          </AppSlot>
        </Apps>
        <TwoLines $end>
          <span>00:31</span>
          <span>31/08/2024</span>
        </TwoLines>
      </Taskbar>
    </Desktop>
  );
}
